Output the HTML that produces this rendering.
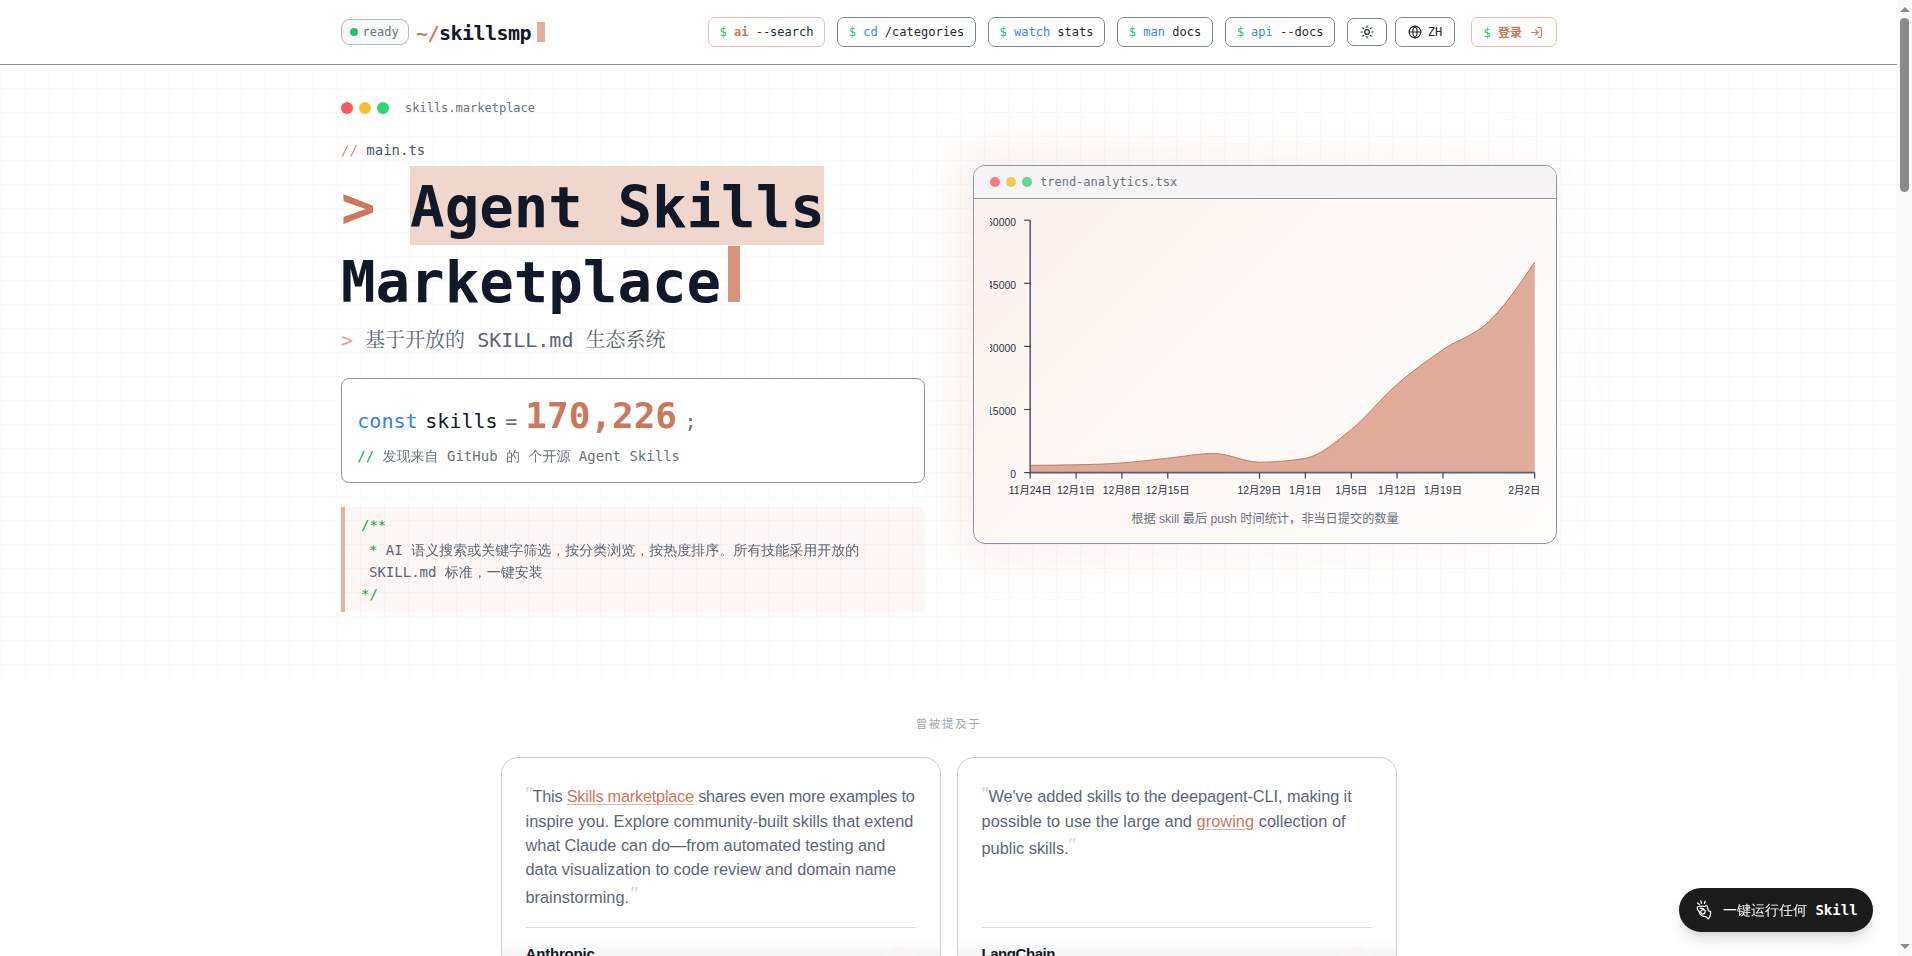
<!DOCTYPE html>
<html lang="zh-CN">
<head>
<meta charset="utf-8">
<title>Agent Skills Marketplace</title>
<style>
*{box-sizing:border-box;margin:0;padding:0}
html,body{width:1912px;height:956px;overflow:hidden;background:#fff}
body{position:relative;font-family:"DejaVu Sans Mono","Liberation Mono","WenQuanYi Zen Hei",monospace;color:#111827;-webkit-font-smoothing:antialiased}
.abs{position:absolute}
.mono{font-family:"DejaVu Sans Mono","Liberation Mono","WenQuanYi Zen Hei",monospace}
.sans{font-family:"Liberation Sans","Noto Sans CJK SC",sans-serif}
.t{position:absolute;white-space:pre}
.pri{color:#cc785c}
.grn{color:#22c55e}
.blu{color:#3b82f6}
.gry{color:#6b7280}

/* page */
#page{position:absolute;left:0;top:0;width:1897px;height:956px;overflow:hidden;background:#fff}
#hero{position:absolute;left:0;top:64px;width:1897px;height:612px;
 background-image:linear-gradient(to right,#fafafb 1px,transparent 1px),linear-gradient(to bottom,#fafafb 1px,transparent 1px);
 background-size:24px 24px;background-position:0 0}
#hdr{position:absolute;left:0;top:0;width:1897px;height:65px;background:#fff;border-bottom:1px solid #8c93a6}

/* header */
.badge{position:absolute;left:341px;top:19px;width:68px;height:26px;border:1px solid #b4b9c4;border-radius:9px;background:#f9fafb}
.badge i{position:absolute;left:8px;top:8px;width:8px;height:8px;border-radius:50%;background:#22c55e}
.badge span{position:absolute;left:20.5px;top:0;line-height:24px;font-size:12px;color:#6b7280}
.nb{position:absolute;top:17px;height:30px;border:1px solid #7d8596;border-radius:7px;background:#fff;font-size:12px;line-height:28px;text-align:center;white-space:pre;color:#1f2937}
.nb.p{border-color:#e8b9aa}


/* mentions */
.card{position:absolute;top:757px;width:440px;height:260px;border:1px solid #c9cdd6;border-radius:17px;background:linear-gradient(to bottom,#fff 0,#fff 183px,#f2f2f4 200px,#ededf0 260px)}
.q{position:absolute;white-space:pre;font-family:"Liberation Sans","Noto Sans CJK SC",sans-serif;font-size:16.35px;line-height:24px;color:#5d6676}
.q a{color:#cc785c;text-decoration:underline;text-decoration-color:#e5b3a3;text-decoration-thickness:1px;text-underline-offset:2px}
.qm{position:absolute;font-family:"Liberation Serif",serif;font-style:italic;font-size:20px;line-height:24px;color:#edc8bc}
.hr{position:absolute;height:1px;background:#d9dce2}
.nm{position:absolute;font-family:"Liberation Sans",sans-serif;font-weight:bold;font-size:15px;line-height:20px;color:#111827;white-space:pre}


/* float */
#fl{position:absolute;left:1679px;top:888px;width:194px;height:44px;border-radius:22px;background:#1b1b1b;box-shadow:0 10px 15px -3px rgba(0,0,0,.13),0 4px 6px -4px rgba(0,0,0,.12)}
#fl .x{position:absolute;left:44px;top:0;line-height:44px;font-size:14px;color:#fff;white-space:pre}

/* scrollbar */
#sb{position:absolute;left:1897px;top:0;width:15px;height:956px;background:#fafafa}
#sb .th{position:absolute;left:3px;top:18px;width:9px;height:174px;border-radius:5px;background:#8b8b8b}
#sb .up{position:absolute;left:2.5px;top:7px;width:0;height:0;border-left:5px solid transparent;border-right:5px solid transparent;border-bottom:5px solid #8b8b8b}
#sb .dn{position:absolute;left:2.5px;top:943.5px;width:0;height:0;border-left:5px solid transparent;border-right:5px solid transparent;border-top:5px solid #8b8b8b}
</style>
</head>
<body>
<div id="page">
  <div id="hero"></div>


  <!-- hero left -->
  <div class="abs" style="left:341px;top:102px;width:12px;height:12px;border-radius:50%;background:#fc565e"></div>
  <div class="abs" style="left:359px;top:102px;width:12px;height:12px;border-radius:50%;background:#f3c133"></div>
  <div class="abs" style="left:377px;top:102px;width:12px;height:12px;border-radius:50%;background:#33d474"></div>
  <div class="t gry" style="left:405px;top:98px;font-size:12px;line-height:20px">skills.marketplace</div>
  <div class="t" style="left:341px;top:139px;font-size:14px;line-height:22px;color:#4b5563"><span class="pri" style="opacity:.85">//</span> main.ts</div>

  <div class="abs" style="left:410px;top:166px;width:414px;height:79px;background:#f0d7ce"></div>
  <h1 class="t" style="left:341px;top:170px;font-size:57.4px;line-height:75px;font-weight:bold;color:#111827"><span class="pri">&gt;</span> Agent Skills
Marketplace</h1>
  <div class="abs" style="left:728px;top:246px;width:12px;height:56px;background:#d6937d"></div>

  <div class="t" style="left:341px;top:326px;font-size:20px;line-height:28px;color:#5b6472;font-family:'DejaVu Sans Mono','Liberation Mono','Noto Serif CJK SC',monospace"><span style="color:#dba691">&gt;</span> 基于开放的 SKILL.md 生态系统</div>

  <div class="abs" style="left:341px;top:378px;width:584px;height:105px;border:1px solid #8c93a6;border-radius:8px;background:#fff"></div>
  <div class="t" style="left:357.3px;top:405px;font-size:20px;line-height:32px"><span style="color:#3080ff">const</span></div>
  <div class="t" style="left:425.3px;top:405px;font-size:20px;line-height:32px;color:#111827">skills</div>
  <div class="t" style="left:505.3px;top:405px;font-size:20px;line-height:32px;color:#6b7280">=</div>
  <div class="t pri" style="left:525.3px;top:392px;font-size:36px;line-height:48px;font-weight:bold">170,226</div>
  <div class="t" style="left:684.5px;top:405px;font-size:20px;line-height:32px;color:#6b7280">;</div>
  <div class="t" style="left:357.3px;top:445px;font-size:14px;line-height:22px;color:#6b7280"><span style="color:#16a34a">//</span> 发现来自 GitHub 的 个开源 Agent Skills</div>

  <div class="abs" style="left:341px;top:507px;width:584px;height:105px;border-left:4px solid #e3b3a4;border-radius:0 8px 8px 0;background:rgba(204,120,92,.065)"></div>
  <div class="t" style="left:361px;top:514px;font-size:14px;line-height:22.75px;color:#16a34a">/**</div>
  <div class="t" style="left:369px;top:538.5px;font-size:14px;line-height:22.75px;color:#5b6472"><span style="color:#16a34a">*</span> AI 语义搜索或关键字筛选，按分类浏览，按热度排序。所有技能采用开放的
SKILL.md 标准，一键安装</div>
  <div class="t" style="left:361px;top:583px;font-size:14px;line-height:22.75px;color:#16a34a">*/</div>


  <!-- hero right -->
  <div class="abs" style="left:957px;top:149px;width:616px;height:411px;border-radius:24px;background:linear-gradient(100deg,rgba(204,120,92,.12) 0%,rgba(204,120,92,.07) 45%,rgba(204,120,92,.025) 100%);filter:blur(22px)"></div>
  <div class="abs" style="left:973px;top:165px;width:584px;height:379px;border:1px solid #8c93a6;border-radius:12px;overflow:hidden;background:linear-gradient(135deg,#fcf1ee 0%,#fdf8f6 50%,#fefdfc 100%)">
    <div class="abs" style="left:0;top:0;width:582px;height:33px;background:#f6f4f4;border-bottom:1px solid #8c93a6"></div>
    <div class="abs" style="left:16px;top:11px;width:10px;height:10px;border-radius:50%;background:#f87a80"></div>
    <div class="abs" style="left:32px;top:11px;width:10px;height:10px;border-radius:50%;background:#f5c855"></div>
    <div class="abs" style="left:48px;top:11px;width:10px;height:10px;border-radius:50%;background:#5ed88f"></div>
    <div class="t gry" style="left:66px;top:6px;font-size:12px;line-height:20px">trend-analytics.tsx</div>
  </div>
  <svg class="abs" style="left:0;top:0" width="1897" height="956" viewBox="0 0 1897 956">
    <g font-family="'Liberation Sans','Noto Sans CJK SC',sans-serif" font-size="10.4" fill="#2b3140">
      <svg x="990" y="205" width="560" height="310" viewBox="990 205 560 310">
        <path d="M1030.20,465.30C1045.49,465.22,1060.78,465.13,1076.07,464.80C1091.35,464.47,1106.64,464.10,1121.93,463.00C1137.22,461.90,1152.51,459.78,1167.80,458.20C1183.08,456.62,1198.37,453.50,1213.66,453.50C1228.95,453.50,1244.24,462.20,1259.53,462.20C1274.81,462.20,1290.10,460.90,1305.39,458.30C1320.68,455.70,1335.97,441.83,1351.26,429.50C1366.54,417.17,1381.83,397.60,1397.12,384.30C1412.41,371.00,1427.70,360.15,1442.99,349.70C1458.27,339.25,1473.56,336.20,1488.85,321.60C1504.14,307.00,1519.43,284.55,1534.72,262.10L1534.72,472.6L1030.2,472.6Z" fill="#cc785c" fill-opacity="0.6"/>
        <path d="M1030.20,465.30C1045.49,465.22,1060.78,465.13,1076.07,464.80C1091.35,464.47,1106.64,464.10,1121.93,463.00C1137.22,461.90,1152.51,459.78,1167.80,458.20C1183.08,456.62,1198.37,453.50,1213.66,453.50C1228.95,453.50,1244.24,462.20,1259.53,462.20C1274.81,462.20,1290.10,460.90,1305.39,458.30C1320.68,455.70,1335.97,441.83,1351.26,429.50C1366.54,417.17,1381.83,397.60,1397.12,384.30C1412.41,371.00,1427.70,360.15,1442.99,349.70C1458.27,339.25,1473.56,336.20,1488.85,321.60C1504.14,307.00,1519.43,284.55,1534.72,262.10" fill="none" stroke="#cc785c" stroke-width="1"/>
        <g stroke="#5a6070" stroke-width="1.6" fill="none">
          <line x1="1030.2" y1="220.2" x2="1030.2" y2="473.4"/>
          <line x1="1030.2" y1="472.6" x2="1534.7" y2="472.6"/>
        </g>
        <g stroke="#3d4352" stroke-width="1.2" fill="none"><line x1="1030.2" y1="472.6" x2="1030.2" y2="478.6"/><line x1="1076.1" y1="472.6" x2="1076.1" y2="478.6"/><line x1="1121.9" y1="472.6" x2="1121.9" y2="478.6"/><line x1="1167.8" y1="472.6" x2="1167.8" y2="478.6"/><line x1="1259.5" y1="472.6" x2="1259.5" y2="478.6"/><line x1="1305.4" y1="472.6" x2="1305.4" y2="478.6"/><line x1="1351.3" y1="472.6" x2="1351.3" y2="478.6"/><line x1="1397.1" y1="472.6" x2="1397.1" y2="478.6"/><line x1="1443.0" y1="472.6" x2="1443.0" y2="478.6"/><line x1="1534.7" y1="472.6" x2="1534.7" y2="478.6"/><line x1="1024.2" y1="472.6" x2="1030.2" y2="472.6"/><line x1="1024.2" y1="409.5" x2="1030.2" y2="409.5"/><line x1="1024.2" y1="346.4" x2="1030.2" y2="346.4"/><line x1="1024.2" y1="283.3" x2="1030.2" y2="283.3"/><line x1="1024.2" y1="220.2" x2="1030.2" y2="220.2"/></g>
        <text x="1016" y="477.9" text-anchor="end">0</text><text x="1016" y="414.8" text-anchor="end">15000</text><text x="1016" y="351.7" text-anchor="end">30000</text><text x="1016" y="288.6" text-anchor="end">45000</text><text x="1016" y="225.5" text-anchor="end">60000</text><text x="1030.2" y="493.8" text-anchor="middle">11月24日</text><text x="1076.1" y="493.8" text-anchor="middle">12月1日</text><text x="1121.9" y="493.8" text-anchor="middle">12月8日</text><text x="1167.8" y="493.8" text-anchor="middle">12月15日</text><text x="1259.5" y="493.8" text-anchor="middle">12月29日</text><text x="1305.4" y="493.8" text-anchor="middle">1月1日</text><text x="1351.3" y="493.8" text-anchor="middle">1月5日</text><text x="1397.1" y="493.8" text-anchor="middle">1月12日</text><text x="1443.0" y="493.8" text-anchor="middle">1月19日</text><text x="1540.5" y="493.8" text-anchor="end">2月2日</text>
      </svg>
      <text x="1265" y="522.5" text-anchor="middle" fill="#6b7280" font-size="12.2">根据 skill 最后 push 时间统计，非当日提交的数量</text>
    </g>
  </svg>


  <!-- mentions -->
  <div class="t sans" style="left:847.7px;width:200px;top:714px;text-align:center;font-size:11.5px;line-height:20px;letter-spacing:1.6px;color:#a4a9b4;text-indent:1.6px">曾被提及于</div>
  <div class="card" style="left:501px"></div>
  <div class="card" style="left:957px"></div>

  <div class="qm" style="left:524px;top:782px">"</div>
  <div class="q" style="left:532.5px;top:783.5px;letter-spacing:-0.25px">This <a>Skills marketplace</a> shares even more examples to</div>
  <div class="q" style="left:525.5px;top:809px">inspire you. Explore community-built skills that extend</div>
  <div class="q" style="left:525.5px;top:833px">what Claude can do—from automated testing and</div>
  <div class="q" style="left:525.5px;top:857px">data visualization to code review and domain name</div>
  <div class="q" style="left:525.5px;top:884.7px">brainstorming.</div>
  <div class="qm" style="left:629px;top:882px">"</div>
  <div class="hr" style="left:526px;top:927px;width:390px"></div>
  <div class="abs" style="left:884px;top:947px;width:32px;height:32px;border-radius:50%;background:#f7f5f5"></div>
  <div class="nm" style="left:525.5px;top:944px;letter-spacing:-0.18px">Anthropic</div>

  <div class="qm" style="left:980px;top:782px">"</div>
  <div class="q" style="left:988.5px;top:783.5px;letter-spacing:-0.08px">We've added skills to the deepagent-CLI, making it</div>
  <div class="q" style="left:981.5px;top:809px;letter-spacing:0.05px">possible to use the large and <a>growing</a> collection of</div>
  <div class="q" style="left:981.5px;top:835.5px">public skills.</div>
  <div class="qm" style="left:1067px;top:833px">"</div>
  <div class="hr" style="left:982px;top:927px;width:390px"></div>
  <div class="abs" style="left:1340px;top:947px;width:32px;height:32px;border-radius:50%;background:#f7f5f5"></div>
  <div class="nm" style="left:981.5px;top:944px;letter-spacing:-0.45px">LangChain</div>



  <div id="hdr">
    <div class="badge"><i></i><span>ready</span></div>
    <div class="t" style="left:416px;top:16.5px;font-size:20px;line-height:32px;font-weight:bold;letter-spacing:-0.54px"><span class="pri">~/</span>skillsmp</div>
    <div class="abs" style="left:537px;top:22px;width:8px;height:20px;background:#e0ae9d"></div>

    <div class="nb p" style="left:708px;width:117px"><span class="grn">$</span> <b class="pri">ai</b> --search</div>
    <div class="nb" style="left:837px;width:139px"><span class="grn">$</span> <span class="blu">cd</span> /categories</div>
    <div class="nb" style="left:988px;width:117px"><span class="grn">$</span> <span class="blu">watch</span> stats</div>
    <div class="nb" style="left:1117px;width:96px"><span class="grn">$</span> <span class="blu">man</span> docs</div>
    <div class="nb" style="left:1225px;width:110px"><span class="grn">$</span> <span class="blu">api</span> --docs</div>
    <div class="nb" style="left:1347px;width:40px;top:18px;height:28px"><svg class="abs" style="left:12px;top:6px" width="14" height="14" viewBox="0 0 24 24" fill="none" stroke="#1f2937" stroke-width="2" stroke-linecap="round" stroke-linejoin="round"><circle cx="12" cy="12" r="4"/><path d="M12 2v2"/><path d="M12 20v2"/><path d="m4.93 4.93 1.41 1.41"/><path d="m17.66 17.66 1.41 1.41"/><path d="M2 12h2"/><path d="M20 12h2"/><path d="m6.34 17.66-1.41 1.41"/><path d="m19.07 4.93-1.41 1.41"/></svg></div>
    <div class="nb" style="left:1395px;width:60px"><svg class="abs" style="left:12px;top:7px" width="14" height="14" viewBox="0 0 24 24" fill="none" stroke="#1f2937" stroke-width="2" stroke-linecap="round" stroke-linejoin="round"><circle cx="12" cy="12" r="10"/><path d="M12 2a14.5 14.5 0 0 0 0 20 14.5 14.5 0 0 0 0-20"/><path d="M2 12h20"/></svg><span class="abs" style="left:31.8px;top:0;line-height:28px;font-size:12px;color:#1f2937">ZH</span></div>
    <div class="nb p" style="left:1471px;width:86px"><span class="abs" style="left:11.5px;top:0;line-height:28px;font-size:12px;white-space:pre"><span class="grn">$</span> <b class="pri" style="font-family:'Noto Sans CJK SC',sans-serif">登录</b></span><svg class="abs" style="left:58px;top:7.5px" width="13" height="13" viewBox="0 0 24 24" fill="none" stroke="#cc785c" stroke-width="2" stroke-linecap="round" stroke-linejoin="round"><path d="M15 3h4a2 2 0 0 1 2 2v14a2 2 0 0 1-2 2h-4"/><polyline points="10 17 15 12 10 7"/><line x1="15" x2="3" y1="12" y2="12"/></svg></div>
  </div>


  <div id="fl"><svg class="abs" style="left:17px;top:12px;overflow:visible" width="17" height="20" viewBox="0 0 17 20" fill="none" stroke="#fff" stroke-width="1.25" stroke-linecap="round" stroke-linejoin="round"><path d="M1.24,7.63C1.35,7.15,1.47,6.77,2.26,6.50C3.04,6.23,4.89,6.01,5.95,6.01C7.00,6.01,7.93,6.56,8.59,6.50C9.24,6.44,9.46,5.70,9.90,5.63C10.34,5.57,10.91,5.67,11.22,6.12C11.54,6.58,11.57,7.60,11.79,8.38C12.01,9.17,12.08,10.30,12.54,10.83C13.00,11.37,14.23,10.96,14.54,11.59C14.84,12.21,14.56,13.63,14.39,14.60C14.21,15.57,13.88,16.72,13.48,17.42C13.08,18.13,12.48,18.90,11.98,18.82C11.47,18.74,11.28,17.39,10.47,16.93C9.65,16.48,8.08,16.49,7.08,16.11C6.07,15.72,5.10,15.35,4.44,14.60C3.78,13.85,3.60,12.45,3.12,11.59C2.65,10.72,1.93,10.06,1.62,9.40C1.30,8.74,1.13,8.11,1.24,7.63Z"/><path d="M4.07,8.20 L7.08,8.57 L9.34,10.83 L8.59,13.47 L5.95,14.03 L4.44,11.96 L5.57,10.08 L7.83,9.70"/><line x1="1.62" y1="3.00" x2="3.31" y2="4.50"/><line x1="4.82" y1="0.85" x2="5.42" y2="3.30"/><line x1="9.15" y1="1.23" x2="8.36" y2="3.49"/></svg><div class="x">一键运行任何 <b>Skill</b></div></div>

</div>
<div id="sb"><div class="up"></div><div class="th"></div><div class="dn"></div></div>
</body>
</html>
